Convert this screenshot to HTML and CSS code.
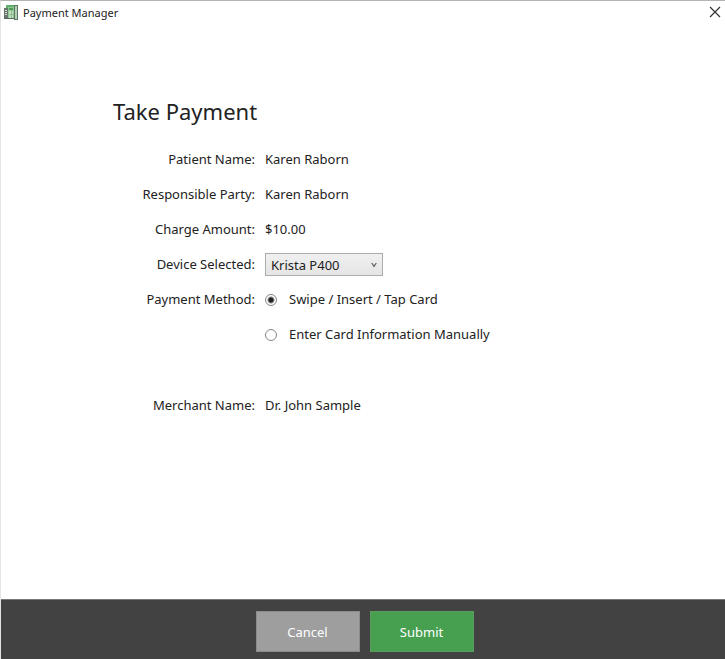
FILE: index.html
```html
<!DOCTYPE html>
<html lang="en">
<head>
<meta charset="utf-8">
<title>Payment Manager</title>
<link rel="stylesheet" href="styles.css">
</head>
<body>
<form class="window">
  <header class="titlebar">
    <svg class="app-icon" viewBox="0 0 16 16" aria-hidden="true">
      <path d="M1 4h4v11H1z" fill="#68736c"/>
      <path d="M2 6h2v1H2zM2 8h2v1H2zM2 10h2v1H2z" fill="#d5ddd7"/>
      <path d="M3 1h9v3H3z" fill="#5fae6a"/>
      <path d="M5 3h6v11H5z" fill="#8fc894"/>
      <path d="M6 4h4v2H6z" fill="#4a9c58"/>
      <path d="M6 7h4v7H6z" fill="#c3e0c2"/>
      <path d="M8 7h1v7H8zM6 10h4v1H6z" fill="#8dba8e"/>
      <path d="M11 1h4v15h-4z" fill="#5d7862"/>
      <path d="M12 2h2v13h-2z" fill="#b3d0b5"/>
      <path d="M1 14h10v1H1z" fill="#59665c"/>
    </svg>
    <span class="app-name">Payment Manager</span>
    <button class="close" type="button" aria-label="Close">
      <svg viewBox="0 0 12 12" aria-hidden="true"><path d="M1 1l10 10M11 1L1 11" stroke="#333" stroke-width="1.2" fill="none"/></svg>
    </button>
  </header>
  <main class="content">
    <h1 class="heading">Take Payment</h1>
    <div class="fields">
      <span class="label">Patient Name:</span><span>Karen Raborn</span>
      <span class="label">Responsible Party:</span><span>Karen Raborn</span>
      <span class="label">Charge Amount:</span><span>$10.00</span>
      <label class="label" for="device">Device Selected:</label>
      <span class="select-box">
        <select id="device" class="select"><option>Krista P400</option></select>
        <svg class="chevron" viewBox="0 0 6 6" aria-hidden="true"><path d="M.7 1L3 4.4 5.3 1" stroke="#606060" stroke-width="1.2" fill="none"/></svg>
      </span>
      <span class="label" id="method">Payment Method:</span>
      <div class="options" role="radiogroup" aria-labelledby="method">
        <label class="option"><input class="radio" type="radio" name="method" checked>Swipe / Insert / Tap Card</label>
        <label class="option"><input class="radio" type="radio" name="method">Enter Card Information Manually</label>
      </div>
      <span class="label merchant">Merchant Name:</span><span class="merchant">Dr. John Sample</span>
    </div>
  </main>
  <footer class="actions">
    <button class="button cancel" type="button">Cancel</button>
    <button class="button submit" type="button">Submit</button>
  </footer>
</form>
</body>
</html>
```
FILE: styles.css
```css
* {
  box-sizing: border-box;
}

body {
  margin: 0;
  background: #fff;
  color: #222;
  font-family: "Noto Sans", "Open Sans", sans-serif;
  font-size: 13px;
}

.window {
  display: flex;
  flex-direction: column;
  min-height: 100vh;
  border-top: 1px solid #b4b4b4;
  border-left: 1px solid #e4e4e4;
}

.titlebar {
  display: flex;
  align-items: center;
  gap: 4px;
  height: 22px;
  padding: 0 4px 0 2px;
  font-size: 11px;
}

.app-icon {
  width: 16px;
  height: 16px;
}

.close {
  display: flex;
  margin-left: auto;
  padding: 0;
  border: 0;
  background: none;
}

.close svg {
  width: 12px;
  height: 12px;
}

.content {
  flex: 1;
  padding: 71px 16px 24px 112px;
}

.heading {
  margin: 0 0 14px;
  font-size: 22px;
  font-weight: 400;
  line-height: 34px;
}

.fields {
  display: grid;
  grid-template-columns: 142px 1fr;
  column-gap: 10px;
  line-height: 35px;
}

.label {
  text-align: right;
  white-space: nowrap;
}

.select-box {
  position: relative;
  display: flex;
  align-items: center;
  width: 118px;
}

.select {
  appearance: none;
  width: 100%;
  height: 23px;
  padding: 0 20px 0 5px;
  border: 1px solid #acacac;
  border-radius: 0;
  background: linear-gradient(#f0f0f0, #e5e5e5);
  color: inherit;
  font: inherit;
  line-height: 20px;
}

.chevron {
  position: absolute;
  right: 6px;
  width: 6px;
  height: 6px;
  pointer-events: none;
}

.options {
  display: flex;
  flex-direction: column;
}

.option {
  display: flex;
  align-items: center;
  gap: 12px;
}

.radio {
  appearance: none;
  width: 12px;
  height: 12px;
  margin: 0;
  border: 1px solid #858585;
  border-radius: 50%;
  background: #fff;
}

.radio:checked {
  background: radial-gradient(circle, #222 2px, #fff 4px);
}

.merchant {
  margin-top: 36px;
}

.actions {
  display: flex;
  justify-content: center;
  gap: 10px;
  padding: 11px 0 7px 3px;
  border-top: 1px solid #777;
  background: #424242;
}

.button {
  width: 104px;
  height: 41px;
  padding: 0;
  border: 1px solid #8b8b8b;
  background: #9e9e9e;
  color: #fff;
  font: inherit;
}

.submit {
  border-color: #5a9c60;
  background: #46a050;
}
```
